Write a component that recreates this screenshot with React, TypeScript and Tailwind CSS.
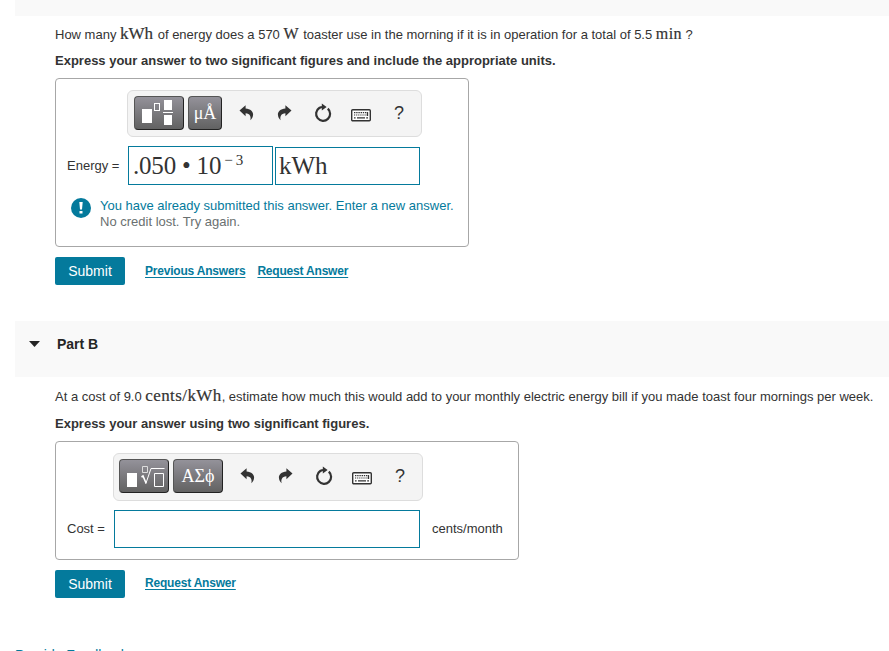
import React from 'react';

// Math text, set in a serif face
const MathText = ({ children, className = '' }: { children: React.ReactNode; className?: string }) => (
  <span className={`font-['Liberation_Serif',serif] leading-none ${className}`}>{children}</span>
);

const UndoIcon = ({ flip = false }: { flip?: boolean }) => (
  <svg width="15" height="16" viewBox="0 0 15 16" className={flip ? '-scale-x-100' : ''} fill="#333">
    <path d="M0.5 5.6L6.6 0.2V3.4C11.5 3.8 14.2 6.4 14.1 9.6C14 12 13 13.8 11.4 15.2C12.2 11.3 11 8.5 6.6 8.2V11.2Z" />
  </svg>
);

const ResetIcon = () => (
  <svg width="18" height="20" viewBox="0 0 18 20" fill="none">
    <path d="M13.8 5.6A7 7 0 1 1 5.2 5C6.3 4.2 7.4 4 9.4 4" stroke="#333" strokeWidth="2.2" />
    <path d="M7.8 0.6L12.6 4L7.8 7.6Z" fill="#333" />
  </svg>
);

const KeyboardIcon = () => (
  <svg width="20" height="13" viewBox="0 0 20 13" fill="none">
    <rect x="0.7" y="0.7" width="18.6" height="11" rx="1" fill="#fff" stroke="#333" strokeWidth="1.4" />
    <path d="M3 3.6H17" stroke="#333" strokeWidth="1.2" strokeDasharray="1.4 0.8" />
    <path d="M3 6H16" stroke="#333" strokeWidth="1.2" strokeDasharray="1.2 0.9" />
    <path d="M3 8.8H4.6M6 8.8H14M15.2 8.8H17M16.5 3.2V7" stroke="#333" strokeWidth="1.3" />
  </svg>
);

const ToolButton = ({ className, children }: { className: string; children: React.ReactNode }) => (
  <button
    className={`flex h-[34px] items-center justify-center rounded-[4px] border border-[#555] border-r-[#222] border-b-[#222] bg-gradient-to-b from-[#94929a] to-[#626262] text-white ${className}`}
  >
    {children}
  </button>
);

const HistoryButtons = () => (
  <div className="flex h-[34px] items-center text-[#333]">
    <button className="flex w-[38px] justify-center"><UndoIcon /></button>
    <button className="flex w-[38px] justify-center"><UndoIcon flip /></button>
    <button className="flex w-[39px] justify-center"><ResetIcon /></button>
    <button className="flex w-[38px] justify-center pt-1"><KeyboardIcon /></button>
    <button className="w-[38px] text-center text-[18px] leading-none">?</button>
  </div>
);

const FractionTemplate = () => (
  <svg width="48" height="32" viewBox="0 0 48 32" fill="none" className="shrink-0" shapeRendering="crispEdges">
    <path d="M7 12H17V26H7Z" fill="#fff" />
    <path d="M19.5 6.5H24.5V13.5H19.5Z" stroke="#fff" />
    <path d="M29 3H37V13H29ZM29 18H37V28H29ZM28 15H38V16H28Z" fill="#fff" />
  </svg>
);

const RootTemplate = () => (
  <svg width="48" height="32" viewBox="0 0 48 32" fill="none" className="shrink-0">
    <path d="M7 13H17V27H7Z" fill="#fff" />
    <path d="M22.5 6.5H27.5V12.5H22.5Z" stroke="#ddd" />
    <path d="M34.5 13.5H43.5V26.5H34.5Z" stroke="#fff" />
    <path d="M21.5 17L23 16L26 23" stroke="#fff" strokeWidth="1.6" />
    <path d="M25.7 24L31 8.5H44.5" stroke="#fff" />
  </svg>
);

const SubmitButton = () => (
  <button className="h-7 w-[70px] rounded-[2px] bg-[#047a9c] text-[14px] text-white">Submit</button>
);

const AnswerLink = ({ children }: { children: React.ReactNode }) => (
  <a href="#" className="text-[12px] leading-4 font-bold tracking-[-0.2px] text-[#047a9c] underline underline-offset-2">
    {children}
  </a>
);

export default function App() {
  return (
    <div className="h-[651px] w-full overflow-hidden bg-white pl-[15px] font-['Liberation_Sans',Arial,sans-serif] text-[13px] text-[#333]">
      <div className="h-4 bg-[#f9f9f9]" />

      {/* Part A */}
      <section className="h-[305px] pl-10">
        <p className="flex h-[31px] items-baseline pt-2 leading-[22px] whitespace-pre">
          <span>How many </span>
          <MathText className="text-[17px] [-webkit-text-stroke:0.2px]">kWh</MathText>
          <span className="ml-px"> of energy does a 570 </span>
          <MathText className="text-[16px] [-webkit-text-stroke:0.2px]">W</MathText>
          <span className="ml-px"> toaster use in the morning if it is in operation for a total of 5.5 </span>
          <MathText className="text-[16px] tracking-[0.4px] [-webkit-text-stroke:0.2px]">min</MathText>
          <span> ?</span>
        </p>
        <p className="h-[31px] pt-[5px] leading-[18px] font-bold">
          Express your answer to two significant figures and include the appropriate units.
        </p>

        <div className="h-[169px] w-[414px] rounded-[4px] border border-[#a7a7a7] pt-[11px]">
          <div className="ml-[71px] flex h-[47px] w-[295px] rounded-[6px] border border-[#ddd] bg-[#f4f4f4] pt-[5px] pl-[6px]">
            <ToolButton className="w-[50px]"><FractionTemplate /></ToolButton>
            <ToolButton className="ml-1 w-[34px]">
              <MathText className="text-[18px]">μÅ</MathText>
            </ToolButton>
            <div className="ml-[5px]"><HistoryButtons /></div>
          </div>
          <div className="mt-[9px] flex h-[39px] items-end">
            <span className="w-[72px] pl-[11px] leading-[38px]">Energy =</span>
            <div className="flex h-[39px] w-[145px] items-center border border-[#047a9c] pl-1">
              <MathText className="text-[25px] tracking-[-0.2px] whitespace-nowrap">
                .050 • 10<sup className="relative -top-[9px] ml-[3px] align-baseline text-[15px] leading-none tracking-normal">−<span className="ml-[3px]">3</span></sup>
              </MathText>
            </div>
            <div className="ml-0.5 flex h-[38px] w-[145px] items-center border border-[#047a9c] pb-0.5 pl-[3px]">
              <MathText className="text-[25px]">kWh</MathText>
            </div>
          </div>
          <div className="mt-[13px] ml-[15px] flex">
            <svg width="20" height="20" viewBox="0 0 20 20" fill="none">
              <circle cx="10" cy="10" r="10" fill="#047a9c" />
              <path d="M8.3 4H11.7L11 11.5H9ZM8.5 13H11.5V15.6H8.5Z" fill="#fff" />
            </svg>
            <div className="ml-[9px] leading-4">
              <p className="text-[#047a9c]">You have already submitted this answer. Enter a new answer.</p>
              <p className="text-[#6a7070]">No credit lost. Try again.</p>
            </div>
          </div>
        </div>

        <div className="mt-[10px] flex">
          <SubmitButton />
          <div className="mt-1.5 ml-5 flex gap-3">
            <AnswerLink>Previous Answers</AnswerLink>
            <AnswerLink>Request Answer</AnswerLink>
          </div>
        </div>
      </section>

      {/* Part B */}
      <div className="flex h-14 items-start bg-[#f9f9f9] pt-[14px] pl-[14px]">
        <svg width="11" height="6" viewBox="0 0 11 6" className="mt-1.5">
          <path d="M0 0H11L5.5 6Z" fill="#252525" />
        </svg>
        <h2 className="ml-[17px] text-[14px] leading-[18px] font-bold text-[#252525]">Part B</h2>
      </div>
      <section className="h-[270px] pl-10">
        <p className="flex h-[33px] items-baseline pt-[9px] leading-[22px] whitespace-pre">
          <span>At a cost of 9.0 </span>
          <MathText className="text-[17px] tracking-[0.4px] [-webkit-text-stroke:0.2px]">cents/kWh</MathText>
          <span>, estimate how much this would add to your monthly electric energy bill if you made toast four mornings per week.</span>
        </p>
        <p className="h-[31px] pt-[5px] leading-[18px] font-bold">Express your answer using two significant figures.</p>

        <div className="h-[119px] w-[464px] rounded-[4px] border border-[#a7a7a7] pt-[11px]">
          <div className="ml-[57px] flex h-12 w-[310px] rounded-[6px] border border-[#ddd] bg-[#f4f4f4] pt-[5px] pl-[5px]">
            <ToolButton className="w-[50px]"><RootTemplate /></ToolButton>
            <ToolButton className="ml-1 w-[50px]">
              <MathText className="text-[18px]">ΑΣϕ</MathText>
            </ToolButton>
            <div className="ml-[5px]"><HistoryButtons /></div>
          </div>
          <div className="mt-[9px] flex h-[38px] items-center">
            <span className="w-[58px] pl-[11px]">Cost =</span>
            <div className="h-[38px] w-[306px] border border-[#047a9c]" />
            <span className="ml-3">cents/month</span>
          </div>
        </div>

        <div className="mt-[10px] flex">
          <SubmitButton />
          <div className="mt-[5px] ml-5 flex">
            <AnswerLink>Request Answer</AnswerLink>
          </div>
        </div>
      </section>
      <a href="#" className="block text-[14px] leading-4 text-[#047a9c]">Provide Feedback</a>
    </div>
  );
}
